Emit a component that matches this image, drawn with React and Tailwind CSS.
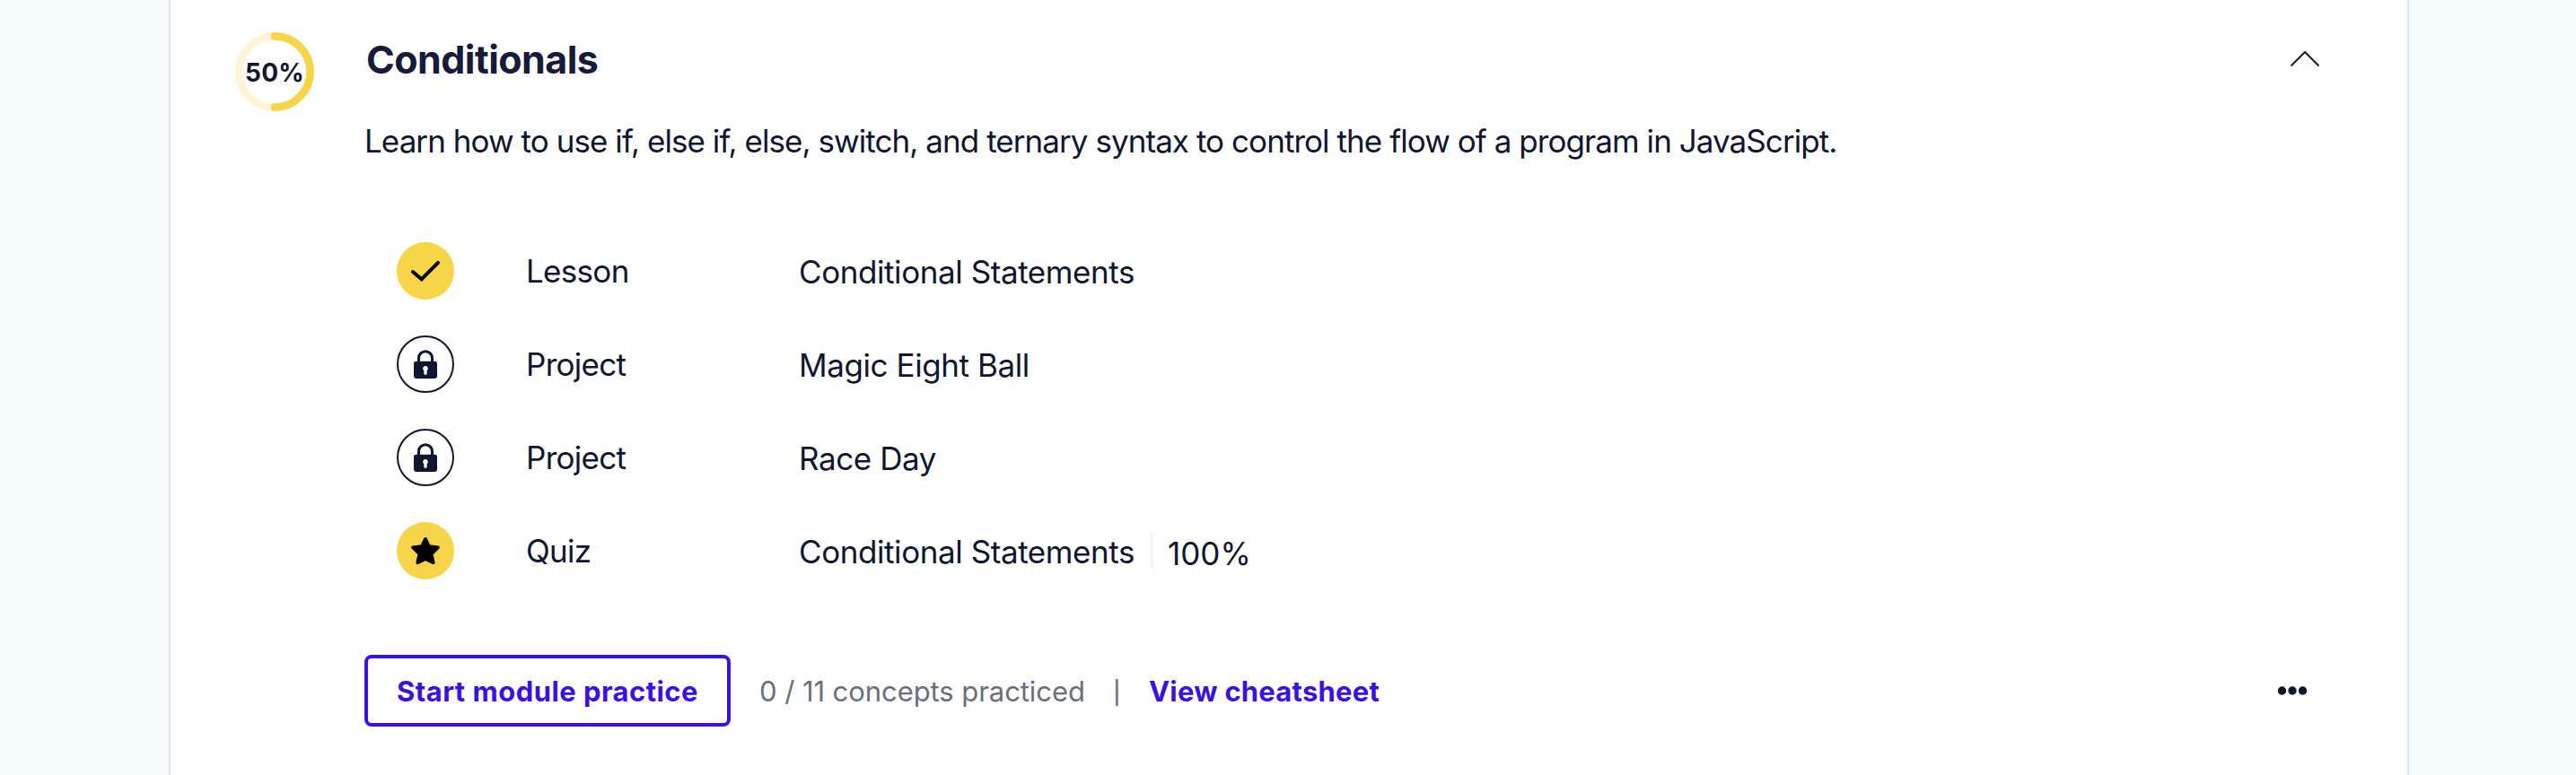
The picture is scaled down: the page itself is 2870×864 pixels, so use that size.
function ProgressRing() {
  return (
    <div className="grid size-[88px] shrink-0 place-items-center">
      <svg className="col-start-1 row-start-1 size-[88px]" viewBox="0 0 88 88" fill="none">
        <circle cx="44" cy="44" r="39.6" stroke="#fff5d6" strokeWidth="8.8" />
        <path d="M44 4.4a39.6 39.6 0 0 1 0 79.2" stroke="#f8d448" strokeWidth="8.8" strokeLinecap="round" />
      </svg>
      <span className="col-start-1 row-start-1 pt-0.5 text-[28px] leading-8 font-bold tracking-[0.2px]">50%</span>
    </div>
  );
}

function CheckIcon() {
  return (
    <svg className="size-16" viewBox="0 0 64 64" fill="none">
      <circle cx="32" cy="32" r="32" fill="#f8d448" />
      <path d="M18 33l9.7 8.2L46 22.8" stroke="#000" strokeWidth="4" strokeLinecap="round" />
    </svg>
  );
}

function LockIcon() {
  return (
    <svg className="size-16" viewBox="0 0 64 64" fill="none">
      <circle cx="32" cy="32" r="31" stroke="#10162f" strokeWidth="2" />
      <path d="M24.500 31v-5.800a7.500 7.500 0 0 1 15 0V31" stroke="#10162f" strokeWidth="3" />
      <rect x="19" y="28.8" width="26" height="19.2" rx="2.4" fill="#10162f" />
      <path d="M32 34a2.900 2.900 0 0 0-1.700 5.200v3a1.700 1.700 0 0 0 3.400 0v-3A2.900 2.900 0 0 0 32 34z" fill="#fff" />
    </svg>
  );
}

function StarIcon() {
  return (
    <svg className="size-16" viewBox="0 0 64 64">
      <circle cx="32" cy="32" r="32" fill="#f8d448" />
      <path
        d="M32 18.800l4.200 8.300 9.900 1.200-7.400 7.400 2.100 9.600-8.800-4.200-8.800 4.200 2.100-9.600-7.400-7.400 9.900-1.200z"
        fill="#000"
        stroke="#000"
        strokeWidth="3.600"
        strokeLinejoin="round"
      />
    </svg>
  );
}

const items = [
  { icon: CheckIcon, kind: "Lesson", title: "Conditional Statements" },
  { icon: LockIcon, kind: "Project", title: "Magic Eight Ball" },
  { icon: LockIcon, kind: "Project", title: "Race Day" },
  { icon: StarIcon, kind: "Quiz", title: "Conditional Statements", score: "100%" },
];

function Item({ icon: Icon, kind, title, score }) {
  return (
    <li className="flex h-16 items-center text-[35px] leading-10 tracking-[-0.42px]">
      <div className="w-36 shrink-0">
        <Icon />
      </div>
      <span className="w-[304px] shrink-0 tracking-[-0.7px]">{kind}</span>
      <span className="pt-0.5">{title}</span>
      {score && (
        <span className="ml-[17px] h-10 border-l-4 border-[#f5f5f5] pl-4 leading-[46px] tracking-[0px]">{score}</span>
      )}
    </li>
  );
}

export default function App() {
  return (
    <main className="flex h-[864px] w-[2870px] overflow-hidden bg-[#f7fcff] pl-[188px] font-[Inter,'Noto_Sans',sans-serif] text-[#10162f]">
      <section className="flex h-full w-[2496px] border-x-2 border-[#dfe2e6] bg-white pl-[72px]">
        <div className="pt-9">
          <ProgressRing />
        </div>
        <div className="ml-14 flex grow flex-col">
          <header className="flex h-[133px] items-start justify-between pt-10 pr-[96px]">
            <h2 className="ml-0.5 text-[43px] leading-[52px] font-bold tracking-[-0.55px] text-[#151b38]">Conditionals</h2>
            <svg className="mt-4 h-5 w-9" viewBox="0 0 36 20" fill="none">
              <path d="M2.500 17.500L18 2l15.500 15.500" stroke="#151b38" strokeWidth="2" />
            </svg>
          </header>
          <p className="text-[35px] leading-12 tracking-[-0.94px] whitespace-nowrap">
            Learn how to use if, else if, else, switch, and ternary syntax to control the flow of a program in JavaScript.
          </p>
          <ul className="mt-[89px] ml-9 flex flex-col gap-10">
            {items.map((item, i) => (
              <Item key={i} {...item} />
            ))}
          </ul>
          <footer className="mt-[84px] flex h-20 items-center text-[31px] leading-10 whitespace-nowrap">
            <button className="h-20 w-[408px] rounded-lg border-4 border-[#3a10e5] pt-0.5 font-bold tracking-[0.45px] text-[#3a10e5]">
              Start module practice
            </button>
            <span className="ml-8 w-[394px] pt-0.5 tracking-[-0.07px] text-[#6a6e7d]">0 / 11 concepts practiced</span>
            <span className="w-10 pt-1 text-[25px] font-medium text-[#6a6e7d]">|</span>
            <a className="pt-0.5 font-bold tracking-[0.22px] text-[#3a10e5]">View cheatsheet</a>
            <svg className="mr-28 ml-auto h-10 w-8" viewBox="0 0 32 40" fill="#10162f">
              <circle cx="4.500" cy="20" r="4.700" />
              <circle cx="16" cy="20" r="4.700" />
              <circle cx="27.500" cy="20" r="4.700" />
            </svg>
          </footer>
        </div>
      </section>
    </main>
  );
}
